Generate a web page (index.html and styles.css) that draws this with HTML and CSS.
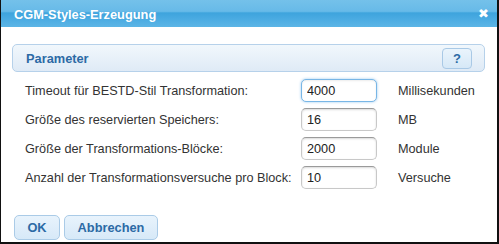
FILE: index.html
```html
<!DOCTYPE html>
<html>
<head>
<meta charset="utf-8">
<link rel="stylesheet" href="styles.css">
</head>
<body>
<div class="window">
  <div class="titlebar">
    <span class="title">CGM-Styles-Erzeugung</span>
    <span class="close">✖</span>
  </div>
  <div class="content">
    <div class="panel-head">
      <span class="panel-title">Parameter</span>
      <button class="help">?</button>
    </div>
    <div class="form">
      <div class="row">
        <label class="lbl">Timeout für BESTD-Stil Transformation:</label>
        <input class="inp focus" value="4000">
        <span class="unit">Millisekunden</span>
      </div>
      <div class="row">
        <label class="lbl">Größe des reservierten Speichers:</label>
        <input class="inp" value="16">
        <span class="unit">MB</span>
      </div>
      <div class="row">
        <label class="lbl">Größe der Transformations-Blöcke:</label>
        <input class="inp" value="2000">
        <span class="unit">Module</span>
      </div>
      <div class="row">
        <label class="lbl">Anzahl der Transformationsversuche pro Block:</label>
        <input class="inp" value="10">
        <span class="unit">Versuche</span>
      </div>
    </div>
    <div class="buttons">
      <button class="btn ok">OK</button>
      <button class="btn cancel">Abbrechen</button>
    </div>
  </div>
</div>
</body>
</html>
```
FILE: styles.css
```css
html, body {
  margin: 0;
  padding: 0;
  background: #ffffff;
}
body {
  font-family: "Liberation Sans", Arial, sans-serif;
  font-size: 12.7px;
  color: #333333;
}
.window {
  width: 499px;
  height: 244px;
  box-sizing: border-box;
  border-left: 1px solid #111;
  border-right: 2px solid #111;
  border-bottom: 2px solid #111;
  background: #fff;
  display: flex;
  flex-direction: column;
}
.titlebar {
  height: 27px;
  flex: none;
  display: flex;
  align-items: center;
  justify-content: space-between;
  padding: 0 8px 0 13px;
  background: linear-gradient(#74c1ea 0%, #67bae8 42%, #3ea4dd 48%, #4aabe2 70%, #5cb5e6 100%);
}
.title {
  color: #fff;
  font-weight: bold;
  font-size: 12.8px;
  padding-top: 1px;
}
.close {
  color: #fff;
  font-size: 13px;
  font-family: "DejaVu Sans", sans-serif;
  font-weight: bold;
}
.content {
  padding: 17px 12px 0 11px;
  display: flex;
  flex-direction: column;
}
.panel-head {
  height: 28px;
  box-sizing: border-box;
  border: 1px solid #b6d1ea;
  border-radius: 5px;
  background: linear-gradient(#f1f7fc, #dfeaf6);
  display: flex;
  align-items: center;
  justify-content: space-between;
  padding: 0 12px 0 13px;
}
.panel-title {
  color: #2c6aa5;
  font-weight: bold;
  font-size: 12.8px;
}
.help {
  width: 30px;
  height: 21px;
  border: 1px solid #a9c9e6;
  border-radius: 4px;
  background: linear-gradient(#eaf4fc, #d6e8f7);
  color: #2c6aa5;
  font-weight: bold;
  font-family: "Liberation Sans", Arial, sans-serif;
  font-size: 13px;
  padding: 0;
}
.form {
  display: flex;
  flex-direction: column;
  gap: 6px;
  padding: 7px 0 0 13px;
}
.row {
  display: flex;
  align-items: center;
  height: 23px;
}
.lbl {
  width: 276px;
  flex: none;
}
.inp {
  width: 76px;
  height: 23px;
  box-sizing: border-box;
  border: 1px solid #c8c8c8;
  border-top-color: #9a9a9a;
  border-radius: 5px;
  padding: 0 5px;
  font-family: "Liberation Sans", Arial, sans-serif;
  font-size: 12.7px;
  color: #222;
  box-shadow: inset 0 1px 2px rgba(0,0,0,0.15);
  margin-right: 21px;
  outline: none;
}
.inp.focus {
  border-color: #78b6e6;
  box-shadow: 0 0 3px #9cc9ef, inset 0 1px 2px rgba(0,0,0,0.08);
}
.unit {
  color: #333;
}
.buttons {
  display: flex;
  gap: 4px;
  padding: 26px 0 0 2px;
}
.btn {
  height: 25px;
  border: 1px solid #aacbe7;
  border-radius: 5px;
  background: linear-gradient(#e8f3fc, #d7e9f8);
  color: #2c6aa5;
  font-weight: bold;
  font-family: "Liberation Sans", Arial, sans-serif;
  font-size: 12.8px;
  padding: 0;
}
.ok { width: 46px; }
.cancel { width: 94px; }
```
